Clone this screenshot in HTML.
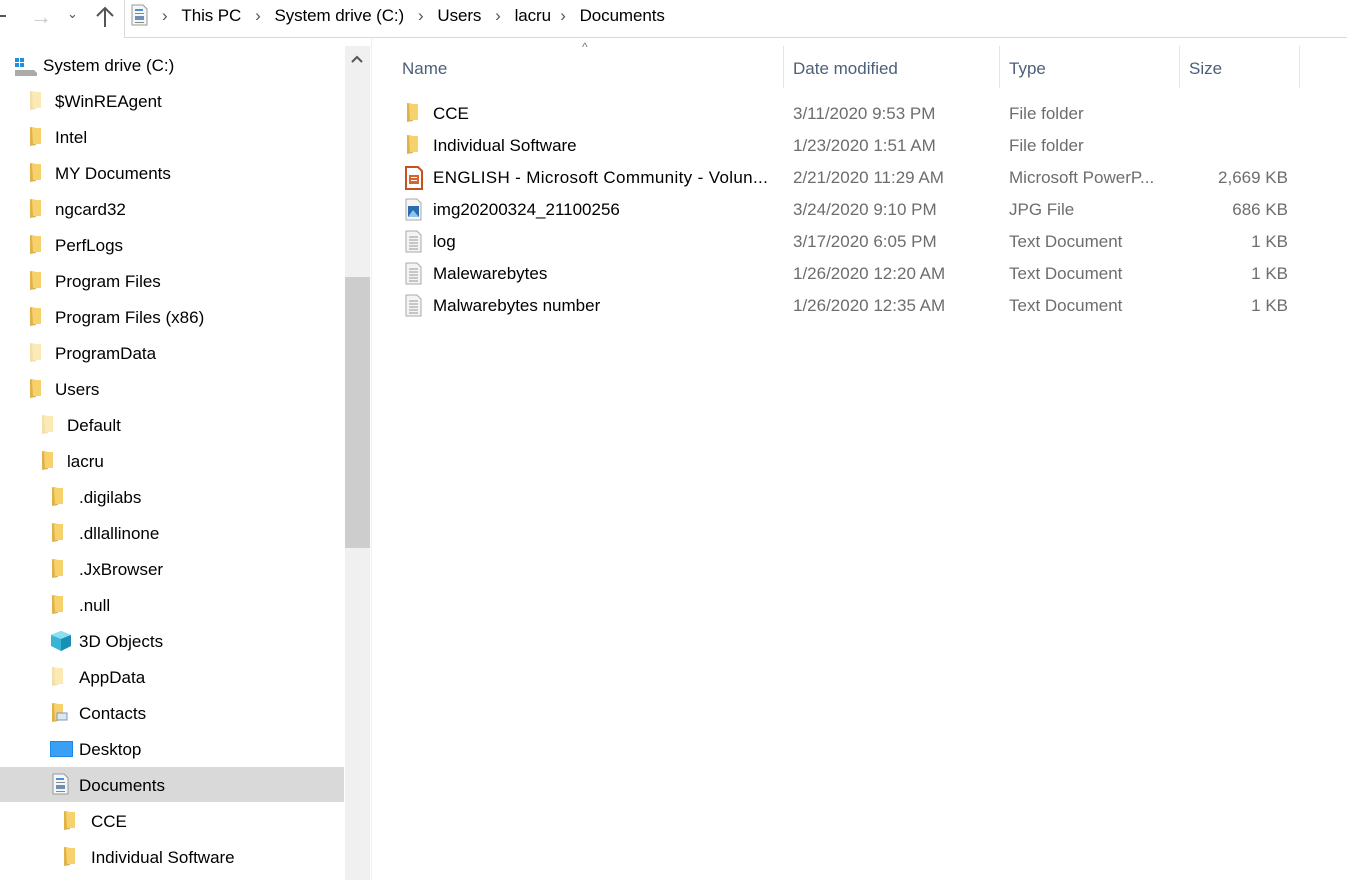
<!DOCTYPE html>
<html><head><meta charset="utf-8"><style>
*{margin:0;padding:0;box-sizing:border-box}
body{width:1347px;height:880px;background:#fff;font-family:"Liberation Sans",sans-serif;font-size:17px;color:#000;position:relative;overflow:hidden}
.a{position:absolute;white-space:nowrap}
.addr{position:absolute;left:124px;top:-1px;width:1230px;height:39px;border:1px solid #d9d9d9}
.nav{position:absolute;left:0;top:47px;width:345px}
.r{position:absolute;height:36px;line-height:37px;white-space:nowrap}
.sb{position:absolute;left:345px;top:46px;width:25px;height:834px;background:#f0f0f0}
.th{position:absolute;left:345px;top:277px;width:25px;height:271px;background:#cdcdcd}
.hd{color:#4c607a;top:59px}
.sep{position:absolute;top:46px;width:1px;height:42px;background:#e5e5e5}
.g{color:#6d6d6d}
</style></head><body>
<div class="a" style="left:0;top:15px;width:6px;height:2px;background:#555"></div>
<div class="a" style="left:30px;top:4px;color:#c8c8c8;font-size:22px">→</div>
<div class="a" style="left:67px;top:6px;color:#555;font-size:13px">⌄</div>
<svg class="a" style="left:95px;top:6px" width="20" height="22"><path d="M10 2V21M2 10L10 2L18 10" stroke="#555" stroke-width="2" fill="none"/></svg>
<div class="addr"></div>
<svg class="a" style="left:131px;top:4px" width="17" height="22"><path d="M1 1H12L16 5V21H1Z" fill="#f4f6f8" stroke="#999"/><rect x="4" y="5" width="8" height="2" fill="#4a90d9"/><rect x="4" y="9" width="9" height="1" fill="#888"/><rect x="4" y="12" width="9" height="4" fill="#6d8fb3"/><rect x="4" y="18" width="9" height="1" fill="#888"/></svg>
<div class="a" style="left:162px;top:7px;line-height:18px;letter-spacing:-0.1px">
<span style="color:#555">›</span>&nbsp;&nbsp;&nbsp;This PC&nbsp;&nbsp;&nbsp;<span style="color:#555">›</span>&nbsp;&nbsp;&nbsp;System drive (C:)&nbsp;&nbsp;&nbsp;<span style="color:#555">›</span>&nbsp;&nbsp;&nbsp;Users&nbsp;&nbsp;&nbsp;<span style="color:#555">›</span>&nbsp;&nbsp;&nbsp;lacru&nbsp;&nbsp;<span style="color:#555">›</span>&nbsp;&nbsp;&nbsp;Documents</div>

<div class="sb"></div><div class="th"></div>
<svg class="a" style="left:350px;top:54px" width="14" height="10"><path d="M2 8L7 3L12 8" stroke="#555" stroke-width="2" fill="none"/></svg>
<div class="a" style="left:371px;top:38px;width:1px;height:842px;background:#f0f0f0"></div>

<div class="nav">
<svg class="r" style="left:14px;top:10px;height:20px" width="24" height="20"><rect x="1" y="1" width="4" height="4" fill="#1e90e0"/><rect x="6" y="1" width="4" height="4" fill="#1e90e0"/><rect x="1" y="6" width="4" height="4" fill="#1e90e0"/><rect x="6" y="6" width="4" height="4" fill="#1e90e0"/><path d="M1 13H20L23 16V19H1Z" fill="#aaa"/></svg>
<div class="r" style="left:43px;top:0">System drive (C:)</div>
</div>
<div id="n"></div>
<script>
var items=[["$WinREAgent",1,"p"],["Intel",1],["MY Documents",1],["ngcard32",1],["PerfLogs",1],["Program Files",1],["Program Files (x86)",1],["ProgramData",1,"p"],["Users",1],["Default",2,"p"],["lacru",2],[".digilabs",3],[".dllallinone",3],[".JxBrowser",3],[".null",3],["3D Objects",3,"3d"],["AppData",3,"p"],["Contacts",3,"c"],["Desktop",3,"d"],["Documents",3,"doc"],["CCE",4],["Individual Software",4]];
var ix=[14,30,42,52,64],tx=[43,55,67,79,91];var h="";
items.forEach(function(it,i){var y=47+36*(i+1);var L=it[1];var k=it[2]||"f";
if(k=="doc")h+='<div class="a" style="left:0;top:'+(y)+'px;width:344px;height:35px;background:#d9d9d9"></div>';
var ic="";
if(k=="f"||k=="p"||k=="c"){var c=k=="p"?"#fbeab5":"#f7d16b";ic='<svg class="a" style="left:'+(ix[L]-2)+'px;top:'+(y+7)+'px" width="18" height="22"><path d="M2 1L8 2V19L2 20Z" fill="'+(k=="p"?"#f3e0a8":"#e0b24a")+'"/><path d="M4 2H13V18H5Z" fill="'+c+'"/>'+(k=="c"?'<rect x="7" y="11" width="10" height="7" fill="#dbe6f2" stroke="#7a9bbf"/>':'')+'</svg>';}
else if(k=="3d")ic='<svg class="a" style="left:'+(ix[L]-2)+'px;top:'+(y+7)+'px" width="22" height="22"><path d="M11 1L21 5V16L11 21L1 16V5Z" fill="#36b5d6"/><path d="M1 5L11 9L21 5L11 1Z" fill="#8be0f0"/><path d="M11 9V21L21 16V5Z" fill="#1a8fb4"/></svg>';
else if(k=="d")ic='<svg class="a" style="left:'+(ix[L]-2)+'px;top:'+(y+10)+'px" width="24" height="18"><rect x="0" y="0" width="23" height="16" fill="#1e88e5"/><rect x="1" y="1" width="21" height="14" fill="#3aa0f5"/></svg>';
else ic='<svg class="a" style="left:'+(ix[L])+'px;top:'+(y+6)+'px" width="17" height="22"><path d="M1 1H12L16 5V21H1Z" fill="#f4f6f8" stroke="#999"/><rect x="4" y="5" width="8" height="2" fill="#4a90d9"/><rect x="4" y="9" width="9" height="1" fill="#888"/><rect x="4" y="12" width="9" height="4" fill="#6d8fb3"/><rect x="4" y="18" width="9" height="1" fill="#888"/></svg>';
h+=ic+'<div class="r" style="left:'+tx[L]+'px;top:'+y+'px">'+it[0]+'</div>';});
document.getElementById("n").innerHTML=h;
</script>

<div class="a" style="left:582px;top:40px;color:#777;font-size:12px">^</div>
<div class="a hd" style="left:402px">Name</div>
<div class="a hd" style="left:793px">Date modified</div>
<div class="a hd" style="left:1009px">Type</div>
<div class="a hd" style="left:1189px">Size</div>
<div class="sep" style="left:783px"></div><div class="sep" style="left:999px"></div><div class="sep" style="left:1179px"></div><div class="sep" style="left:1299px"></div>
<div id="f"></div>
<script>
var rows=[["CCE","3/11/2020 9:53 PM","File folder","","f"],["Individual Software","1/23/2020 1:51 AM","File folder","","f"],["ENGLISH - Microsoft Community - Volun...","2/21/2020 11:29 AM","Microsoft PowerP...","2,669 KB","pp"],["img20200324_21100256","3/24/2020 9:10 PM","JPG File","686 KB","img"],["log","3/17/2020 6:05 PM","Text Document","1 KB","t"],["Malewarebytes","1/26/2020 12:20 AM","Text Document","1 KB","t"],["Malwarebytes number","1/26/2020 12:35 AM","Text Document","1 KB","t"]];
var h="";rows.forEach(function(r,i){var y=104+32*i;var ic;
if(r[4]=="f")ic='<svg class="a" style="left:405px;top:'+(y-2)+'px" width="18" height="22"><path d="M2 1L8 2V19L2 20Z" fill="#e0b24a"/><path d="M4 2H13V18H5Z" fill="#f7d16b"/></svg>';
else if(r[4]=="pp")ic='<svg class="a" style="left:405px;top:'+(y-2)+'px" width="18" height="24"><path d="M1 1H13L17 5V23H1Z" fill="#fff" stroke="#c8501e" stroke-width="2"/><rect x="4" y="9" width="10" height="9" fill="#d8642c"/><rect x="6" y="11" width="6" height="1" fill="#fff"/><rect x="6" y="14" width="6" height="1" fill="#fff"/></svg>';
else if(r[4]=="img")ic='<svg class="a" style="left:405px;top:'+(y-2)+'px" width="18" height="24"><path d="M1 1H12L16 5V22H1Z" fill="#f4f4f4" stroke="#aaa"/><rect x="3" y="8" width="11" height="11" fill="#2a6bb0"/><path d="M3 19L8 12L14 19Z" fill="#8cc4f0"/></svg>';
else ic='<svg class="a" style="left:405px;top:'+(y-2)+'px" width="18" height="24"><path d="M1 1H12L16 5V22H1Z" fill="#f4f4f4" stroke="#aaa"/><path d="M4 7H13M4 10H13M4 13H13M4 16H13M4 19H13" stroke="#999"/></svg>';
h+=ic+'<div class="a" style="left:433px;top:'+y+'px;'+(r[4]=="pp"?'letter-spacing:0.35px':'')+'">'+r[0]+'</div><div class="a g" style="left:793px;top:'+y+'px">'+r[1]+'</div><div class="a g" style="left:1009px;top:'+y+'px">'+r[2]+'</div><div class="a g" style="right:59px;top:'+y+'px">'+r[3]+'</div>';});
document.getElementById("f").innerHTML=h;
</script>
</body></html>
